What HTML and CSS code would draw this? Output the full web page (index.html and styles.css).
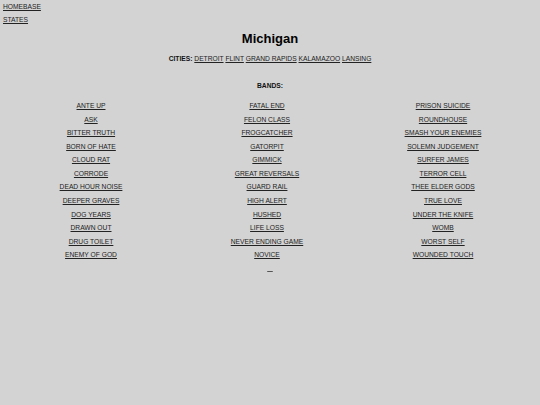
FILE: index.html
```html
<!DOCTYPE html>
<html lang="en">
<head>
<meta charset="UTF-8">
<title>Michigan</title>
<link rel="stylesheet" href="styles.css">
</head>
<body>
<div class="nav">
  <a href="#">HOMEBASE</a>
  <a href="#">STATES</a>
</div>
<h1>Michigan</h1>
<p class="cities"><b>CITIES:</b> <a href="#">DETROIT</a> <a href="#">FLINT</a> <a href="#">GRAND RAPIDS</a> <a href="#">KALAMAZOO</a> <a href="#">LANSING</a></p>
<p class="label"><b>BANDS:</b></p>
<div class="bands">
  <a href="#">ANTE UP</a><a href="#">FATAL END</a><a href="#">PRISON SUICIDE</a>
  <a href="#">ASK</a><a href="#">FELON CLASS</a><a href="#">ROUNDHOUSE</a>
  <a href="#">BITTER TRUTH</a><a href="#">FROGCATCHER</a><a href="#">SMASH YOUR ENEMIES</a>
  <a href="#">BORN OF HATE</a><a href="#">GATORPIT</a><a href="#">SOLEMN JUDGEMENT</a>
  <a href="#">CLOUD RAT</a><a href="#">GIMMICK</a><a href="#">SURFER JAMES</a>
  <a href="#">CORRODE</a><a href="#">GREAT REVERSALS</a><a href="#">TERROR CELL</a>
  <a href="#">DEAD HOUR NOISE</a><a href="#">GUARD RAIL</a><a href="#">THEE ELDER GODS</a>
  <a href="#">DEEPER GRAVES</a><a href="#">HIGH ALERT</a><a href="#">TRUE LOVE</a>
  <a href="#">DOG YEARS</a><a href="#">HUSHED</a><a href="#">UNDER THE KNIFE</a>
  <a href="#">DRAWN OUT</a><a href="#">LIFE LOSS</a><a href="#">WOMB</a>
  <a href="#">DRUG TOILET</a><a href="#">NEVER ENDING GAME</a><a href="#">WORST SELF</a>
  <a href="#">ENEMY OF GOD</a><a href="#">NOVICE</a><a href="#">WOUNDED TOUCH</a>
</div>
<p class="more"><a href="#">&nbsp;&nbsp;&nbsp;</a></p>
</body>
</html>
```
FILE: styles.css
```css
body { margin:0; background:#d3d3d3; font-family:"Liberation Sans",Arial,sans-serif; font-size:6.7px; color:#111; }
a { color:#222; text-decoration:underline; }
.nav { display:flex; flex-direction:column; align-items:flex-start; padding:0 3px; line-height:13px; }
h1 { font-size:13px; line-height:16px; text-align:center; margin:5px 0 4.5px; color:#000; }
p { margin:0; text-align:center; line-height:13px; }
.label { margin-top:14px; }
.bands { display:grid; grid-template-columns:repeat(3, 176px); margin:7.7px 0 0 3px; line-height:13.55px; text-align:center; }
.more { margin-top:-1px; }
.more a { color:#555; }
```
